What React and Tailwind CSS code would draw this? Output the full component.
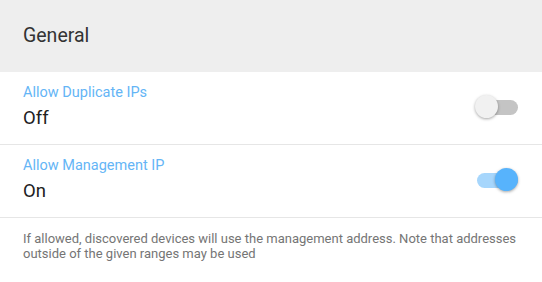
import React from 'react';

export default function App() {
  return (
    <div className="w-[542px] h-[282px] bg-white overflow-hidden" style={{ fontFamily: 'Roboto, "Liberation Sans", sans-serif' }}>
      {/* Header */}
      <div className="h-[72px] bg-[#eeeeee] flex items-center px-[23px]">
        <span className="text-[19.5px] leading-[24px] text-[#333333]">General</span>
      </div>

      <SettingRow label="Allow Duplicate IPs" value="Off" on={false} />
      <SettingRow label="Allow Management IP" value="On" on={true} />

      <p className="pl-[23px] pr-[16px] pt-[13px] text-[13px] leading-[15px] text-[#757575]">
        If allowed, discovered devices will use the management address. Note that addresses outside of the given ranges may be used
      </p>
    </div>
  );
}

function SettingRow({ label, value, on }) {
  return (
    <div className="h-[73px] border-b border-[#e6e6e6] flex justify-between px-[23px]">
      <div className="flex flex-col pt-[12px]">
        <span className="text-[14.5px] leading-[18px] text-[#64b5f6]">{label}</span>
        <span className="text-[18.5px] leading-[24px] text-[#212121] mt-[4px]">{value}</span>
      </div>
      <div className="self-center mt-[-2px]">
        <Toggle on={on} />
      </div>
    </div>
  );
}

function Toggle({ on }) {
  return (
    <div className="relative w-[44px] h-[24px]">
      <div className={`absolute left-[2px] top-[5px] w-[41px] h-[15px] rounded-full ${on ? 'bg-[#a6d6fc]' : 'bg-[#c4c4c4]'}`} />
      <div
        className={`absolute top-[0px] w-[23px] h-[23px] rounded-full shadow-[0_1px_3px_rgba(0,0,0,0.35)] ${on ? 'left-[20px] bg-[#57b3fc]' : 'left-[0px] bg-[#f1f1f1]'}`}
      />
    </div>
  );
}
